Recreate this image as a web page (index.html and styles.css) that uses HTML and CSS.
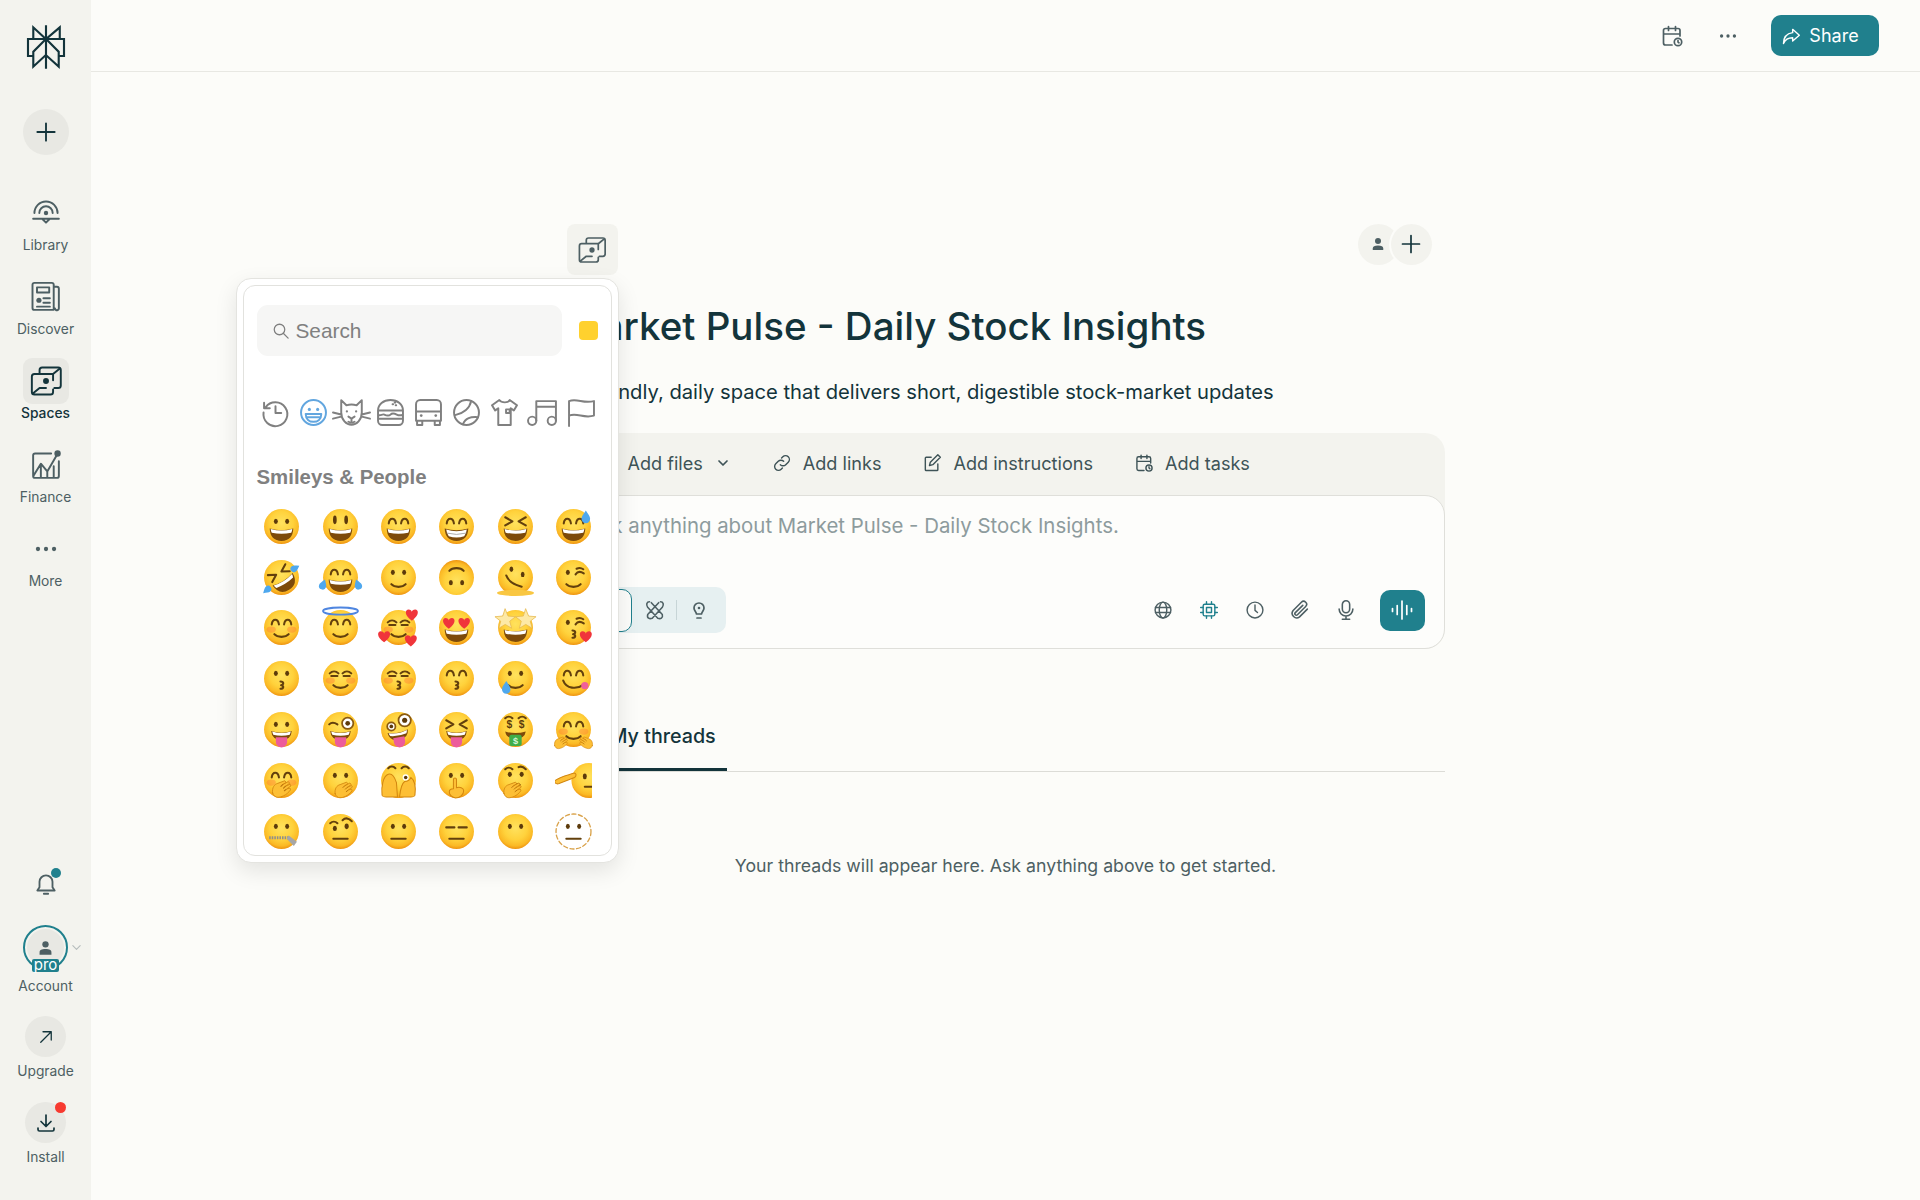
FILE: index.html
```html
<!DOCTYPE html>
<html lang="en">
<head>
<meta charset="utf-8">
<title>Market Pulse - Daily Stock Insights</title>
<link rel="stylesheet" href="styles.css">
</head>
<body>
<svg class="defs" aria-hidden="true">
  <defs>
    <radialGradient id="fg" cx="50%" cy="40%" r="60%">
      <stop offset="0" stop-color="#ffe25e"/><stop offset=".55" stop-color="#ffd23c"/><stop offset=".85" stop-color="#fbb925"/><stop offset="1" stop-color="#ee9410"/>
    </radialGradient>
    <g id="f"><circle cx="18" cy="18" r="17" fill="url(#fg)"/></g>
    <g id="ed"><ellipse class="k" cx="12.5" cy="13" rx="1.9" ry="2.5"/><ellipse class="k" cx="23.5" cy="13" rx="1.9" ry="2.5"/></g>
    <g id="etall"><ellipse class="k" cx="12.5" cy="11.5" rx="1.8" ry="4.2"/><ellipse class="k" cx="23.5" cy="11.5" rx="1.8" ry="4.2"/></g>
    <g id="ea"><path class="s" d="M8.5 15c.8-6 6-6 7 0M20.5 15c1-6 6.200-6 7 0"/></g>
    <g id="ec"><path class="s" d="M7.500 13c2.500-2.500 6-2.500 8.500 0M20 13c2.500-2.500 6-2.500 8.500 0M9 15.500h6M21 15.500h6"/></g>
    <g id="ex"><path class="s" d="M8 9l7 4-7 4M28 9l-7 4 7 4"/></g>
    <g id="ew"><ellipse class="k" cx="12.500" cy="13" rx="1.900" ry="2.500"/><path class="s" d="M20 15c2-3 5-3 8-1M21 9.500c2-1 4.500-1 6.500.5"/></g>
    <g id="mg"><path class="m" d="M6.500 20Q18 23.500 29.500 20 29 32 18 32 7 32 6.500 20Z"/><path class="w" d="M7.500 20.500Q18 23.500 28.500 20.500 28.300 22.500 27.500 24 18 26 8.500 24 7.700 22.500 7.500 20.500Z"/></g>
    <g id="mt"><path class="m" d="M6.500 20Q18 23.500 29.500 20 29 32 18 32 7 32 6.500 20Z"/><path class="w" d="M8 21Q18 24 28 21 27.500 25 25.500 27.500 18 30 10.500 27.500 8.500 25 8 21Z"/><path class="line" d="M8.800 24.500Q18 27 27.200 24.500"/></g>
    <g id="ms"><path class="s" d="M11 24.500c3 3.500 11 3.500 14 0"/></g>
    <g id="mf"><path class="s" d="M11 25h14"/></g>
    <g id="mk"><path class="s" d="M17 21c3.500 0 3.500 3 .5 3.500 3 .5 3 3.500-.5 3.500"/></g>
    <g id="mo"><path class="m" d="M8 19.500Q18 23 28 19.500 27.500 28 18 28 8.500 28 8 19.500Z"/><path class="w" d="M9 20Q18 23 27 20 26.800 21.500 26 23 18 25 10 23 9.200 21.500 9 20Z"/><path class="t" d="M12.500 25.500h11V30a5.500 5.500 0 0 1-11 0Z"/></g>
    <g id="bl"><ellipse class="bl" cx="8" cy="20" rx="4.500" ry="3"/><ellipse class="bl" cx="28" cy="20" rx="4.500" ry="3"/></g>
    <path id="h" class="hr" d="M0 4.500C-6.500 0-5.500-4.500-2.700-4.500-1.200-4.500 0-3.500 0-2.500 0-3.500 1.200-4.500 2.700-4.500 5.500-4.500 6.500 0 0 4.500Z"/>
    <path id="dr" class="dp" d="M0-5C2-2 3.200-.5 3.200 1.200a3.200 3.200 0 0 1-6.400 0C-3.200-.5-2-2 0-5Z"/>
    <path id="st" class="star" d="M0-8 2.200-2.500 8-2 3.500 1.500 5 7 0 4-5 7-3.500 1.500-8-2-2.200-2.500Z"/>
    <g id="hd"><path class="hand" d="M-9 6C-10 0-7-4-3-5L5-8l1.500 2-4 2.500L9-7l1.500 2-5 3.500 5.500-2.500 1 2-5 3.500 4-1 .5 2C7 9 0 11-3 11c-3 0-5-2-6-5Z"/><path class="fold" d="M2.500-3.500l-2 2M5.500-1.500l-2 2M6.500 2l-2 1.500"/></g>
    <path id="rk" d="M8.500 2.500v4M15.500 2.500v4M20 12V6.500a2 2 0 0 0-2-2H5.500a2 2 0 0 0-2 2V19a2 2 0 0 0 2 2H12M3.500 10H20"/>
    <g id="sp"><path d="M9 8.500V5.500a2 2 0 0 1 2-2h12.500a2 2 0 0 1 2 2v12a2 2 0 0 1-2 2h-3M19.500 8.500H5a2 2 0 0 0-2 2v12a2 2 0 0 0 2 2h12.500a2 2 0 0 0 2-2v-2M19.500 8.500v5M19.500 8.500L25 4M3.500 24L9 19.500h5"/><circle class="dot" cx="14" cy="14" r="2.300"/></g>
  </defs>
</svg>

<div class="app">
  <nav class="rail">
    <div class="rail-top">
      <svg class="logo" viewBox="0 0 24 24"><path d="M22.3977 7.0896h-2.3106V.0676l-7.5094 6.3542V.1577h-1.1554v6.1966L4.4904 0v7.0896H1.6023v10.3976h2.8882V24l6.932-6.3591v6.2005h1.1554v-6.0469l6.9318 6.1807v-6.4879h2.8882V7.0896zm-3.4657-4.531v4.531h-5.355l5.355-4.531zm-13.2862.0676 4.8452 4.4634H5.6458V2.6262zM2.7576 16.332V8.245h7.8476l-6.1149 6.1147v1.9723H2.7576zm2.8882 5.0404v-3.8852h.0001v-2.6488l5.7763-5.7764v7.0111l-5.7764 5.2993zm12.7086.0248-5.7766-5.1509V9.0618l5.7766 5.7766v6.5588zm2.8882-5.0652h-1.733v-1.9723L13.3948 8.245h7.8478v8.087z"/></svg>
      <div class="new-btn"><svg class="ic26" viewBox="0 0 24 24"><path d="M12 4v16M4 12h16"/></svg></div>
      <div class="nav-list">
        <a class="nav-item"><span class="nav-ic"><svg class="ic36" viewBox="0 0 28 28"><path d="M5 14a9 9 0 0 1 18 0M8.800 14a5.200 5.200 0 0 1 10.400 0M4 18.500h20M14 21.500l-3-3M14 21.500l3-3"/><circle class="dot" cx="14" cy="14" r="1.700"/></svg></span><span>Library</span></a>
        <a class="nav-item"><span class="nav-ic"><svg class="ic36" viewBox="0 0 28 28"><path d="M20 24H5a1.500 1.500 0 0 1-1.500-1.500v-18A1.500 1.500 0 0 1 5 3h13.500A1.500 1.500 0 0 1 20 4.500Zm0-18h2.500A1.500 1.500 0 0 1 24 7.500v15a1.500 1.500 0 0 1-3 .5M7 6.500h9.500v4H7ZM12 15h5M12 18.500h5M7 21.500h10"/><circle class="dot" cx="8.500" cy="16.500" r="2"/></svg></span><span>Discover</span></a>
        <a class="nav-item active"><span class="nav-ic"><svg class="ic36" viewBox="0 0 28 28"><use href="#sp"/></svg></span><span>Spaces</span></a>
        <a class="nav-item"><span class="nav-ic"><svg class="ic36" viewBox="0 0 28 28"><path d="M18 5H5.500A1.500 1.500 0 0 0 4 6.500v16A1.500 1.500 0 0 0 5.500 24h17a1.500 1.500 0 0 0 1.500-1.500V11M4.500 22l5.500-9 5 6 7-12M10 14v10M15 19v5M20 15v9"/><circle class="dot" cx="23" cy="5" r="2.500"/></svg></span><span>Finance</span></a>
        <a class="nav-item"><span class="nav-ic"><svg class="ic30" viewBox="0 0 28 28"><circle class="dot" cx="6.500" cy="14" r="2"/><circle class="dot" cx="14" cy="14" r="2"/><circle class="dot" cx="21.500" cy="14" r="2"/></svg></span><span>More</span></a>
      </div>
    </div>
    <div class="rail-bottom">
      <div class="bell"><svg class="ic26" viewBox="0 0 24 24"><path d="M4 18h16l-2-3v-5a6 6 0 0 0-12 0v5ZM10 21h4"/></svg><i class="badge teal"></i></div>
      <a class="nav-item account">
        <span class="ring"><span class="avatar"><svg viewBox="0 0 24 24"><circle cx="12" cy="8" r="4"/><path d="M4.500 21v-2.500C4.500 15 7 14 12 14s7.500 1 7.500 4.500V21Z"/></svg></span><b class="pro">pro</b></span>
        <svg class="acct-chev" viewBox="0 0 12 12"><path d="M2 4l4 4 4-4"/></svg>
        <span>Account</span>
      </a>
      <a class="nav-item round"><span class="disc"><svg class="ic18 dark" viewBox="0 0 24 24"><path d="M5 19L19 5M8 5h11v11"/></svg></span><span>Upgrade</span></a>
      <a class="nav-item round"><span class="disc"><svg class="ic24 dark" viewBox="0 0 24 24"><path d="M12 4v11M7 10.500l5 5 5-5M4 17v1.500A1.500 1.500 0 0 0 5.500 20h13a1.500 1.500 0 0 0 1.500-1.500V17"/></svg><i class="badge red"></i></span><span>Install</span></a>
    </div>
  </nav>

  <main class="main">
    <header class="topbar">
      <svg class="ic24 muted" viewBox="0 0 24 24"><use href="#rk"/><circle cx="18" cy="18" r="3.700"/><path d="M18 16.500V18l1 .8"/></svg>
      <svg class="dots" viewBox="0 0 24 24"><circle cx="5" cy="12" r="1.800"/><circle cx="12" cy="12" r="1.800"/><circle cx="19" cy="12" r="1.800"/></svg>
      <button class="share"><svg class="ic20 white" viewBox="0 0 24 24"><path d="M14 4l8 7-8 7v-4C9 14 5 16 3 21c0-7 4-12 11-13Z"/></svg>Share</button>
    </header>

    <section class="column">
      <div class="head-row">
        <div class="space-icon"><svg class="ic32" viewBox="0 0 28 28"><use href="#sp"/></svg></div>
        <div class="people">
          <span class="person"><svg viewBox="0 0 24 24"><circle cx="12" cy="8" r="4"/><path d="M5 20v-2c0-3 2.500-4 7-4s7 1 7 4v2Z"/></svg></span>
          <span class="invite"><svg class="ic24 dark" viewBox="0 0 24 24"><path d="M12 3.500v17M3.500 12h17"/></svg></span>
        </div>

        <div class="picker">
          <div class="picker-inner">
            <div class="search-row">
              <div class="search"><svg class="ic18 gray" viewBox="0 0 24 24"><circle cx="10" cy="10" r="7"/><path d="M15 15l6.500 6.500"/></svg><span>Search</span></div>
              <i class="swatch"></i>
            </div>
            <div class="cats">
              <svg viewBox="0 0 26 26"><path d="M3.500 8A11.500 11.500 0 1 1 1.500 13M2 3.500V9h5.500M13 7v6.500h5.500"/></svg>
              <svg class="on" viewBox="0 0 26 26"><circle cx="13" cy="13" r="12"/><circle class="fillc" cx="9" cy="10" r="1.500"/><circle class="fillc" cx="17" cy="10" r="1.500"/><path d="M5.500 14.500h15c0 5-3.500 7.500-7.500 7.500s-7.500-2.500-7.500-7.500ZM7 17.500h12"/></svg>
              <svg class="wide36" viewBox="0 0 36 26"><path d="M8 1l5 5c3-1 7-1 10 0l5-5v12c0 7-5 12-10 12S8 20 8 13ZM0 13l8 2M0 19l8-2M36 13l-8 2M36 19l-8-2M15 17l3 2 3-2M18 19v2M15 22c2 1 4 1 6 0"/><circle class="fillc" cx="13.500" cy="12" r="1.100"/><circle class="fillc" cx="22.500" cy="12" r="1.100"/></svg>
              <svg viewBox="0 0 26 26"><path d="M1 11C1 5 6 1 13 1s12 4 12 10ZM1 11h24M1 15c2 2 4-1 6 0s4 2 6 0 4-1 6 0 4 1 6 0M1 19h24v2a4 4 0 0 1-4 4H5a4 4 0 0 1-4-4ZM1 11v8M25 11v8M15 5h.5M18 6h.5M17 3.500h.5"/></svg>
              <svg viewBox="0 0 26 26"><path d="M1 5a4 4 0 0 1 4-4h16a4 4 0 0 1 4 4v16H1ZM1 12h24M2 21v4h5v-4M19 21v4h5v-4"/><circle class="fillc" cx="6" cy="16" r="1.300"/><circle class="fillc" cx="20" cy="16" r="1.300"/></svg>
              <svg viewBox="0 0 26 26"><circle cx="13" cy="13" r="12"/><path d="M17.500 2C16 9 10 14 2 15.500"/><path d="M24 17.500C17 17 12 18 9.500 24.500"/></svg>
              <svg viewBox="0 0 26 26"><path d="M8 1L1 6l3 5 3-2v16h12V9l3 2 3-5-7-5c-1 3-8 3-10 0ZM14.500 10h3.500v3.500h-3.500Z"/></svg>
              <svg class="wide30" viewBox="0 0 30 26"><path d="M9 21V2h19v19M9 7.500h19"/><circle cx="5" cy="21" r="4"/><circle cx="24" cy="21" r="4"/></svg>
              <svg class="wide26" viewBox="0 0 26 26"><path d="M1 26V2c8-3 14 3 24 0v14C15 19 9 13 1 16"/></svg>
            </div>
            <div class="cat-title">Smileys &amp; People</div>
            <div class="emoji-grid">
              <svg viewBox="0 0 36 36"><use href="#f"/><use href="#ed"/><use href="#mg"/></svg>
              <svg viewBox="0 0 36 36"><use href="#f"/><use href="#etall"/><use href="#mg"/></svg>
              <svg viewBox="0 0 36 36"><use href="#f"/><use href="#ea"/><use href="#mg"/></svg>
              <svg viewBox="0 0 36 36"><use href="#f"/><use href="#ea"/><use href="#mt"/></svg>
              <svg viewBox="0 0 36 36"><use href="#f"/><use href="#ex"/><use href="#mg"/></svg>
              <svg viewBox="0 0 36 36"><use href="#f"/><use href="#ea"/><use href="#mg"/><use href="#dr" transform="translate(30 9) scale(1.300)"/></svg>

              <svg viewBox="0 0 36 36"><use href="#f"/><g transform="rotate(-32 18 18)"><use href="#ex"/><use href="#mg"/></g><use href="#dr" transform="translate(4 30) rotate(-130)"/><use href="#dr" transform="translate(31 9) rotate(60)"/></svg>
              <svg viewBox="0 0 36 36"><use href="#f"/><use href="#ea"/><use href="#mg"/><use href="#dr" transform="translate(1 25) rotate(20) scale(1.100)"/><use href="#dr" transform="translate(35 25) rotate(-20) scale(1.100)"/></svg>
              <svg viewBox="0 0 36 36"><use href="#f"/><use href="#ed"/><use href="#ms"/></svg>
              <svg viewBox="0 0 36 36"><g transform="rotate(180 18 18)"><use href="#f"/><use href="#ed"/><use href="#ms"/></g></svg>
              <svg viewBox="0 0 36 36"><use href="#f"/><ellipse cx="18" cy="33" rx="18" ry="3" fill="#f9c742"/><ellipse class="k" cx="14" cy="10" rx="1.800" ry="2.600"/><ellipse class="k" cx="25" cy="15" rx="1.800" ry="2.600"/><path class="s" d="M9 16c2 6 8 9 15 11"/></svg>
              <svg viewBox="0 0 36 36"><use href="#f"/><use href="#ew"/><use href="#ms"/></svg>

              <svg viewBox="0 0 36 36"><use href="#f"/><use href="#bl"/><use href="#ea"/><use href="#ms"/></svg>
              <svg viewBox="0 0 36 36"><use href="#f"/><use href="#ea"/><use href="#ms"/><ellipse class="halo" cx="18" cy="2" rx="17" ry="3.500"/></svg>
              <svg viewBox="0 0 36 36"><use href="#f"/><use href="#bl"/><use href="#ec"/><use href="#ms"/><use href="#h" transform="translate(31 6) scale(1.200)"/><use href="#h" transform="translate(4 27) scale(1.200)"/><use href="#h" transform="translate(30 31) scale(1.200)"/></svg>
              <svg viewBox="0 0 36 36"><use href="#f"/><use href="#h" transform="translate(10.500 14) scale(1.150)"/><use href="#h" transform="translate(25.500 14) scale(1.150)"/><use href="#mg"/></svg>
              <svg viewBox="0 0 36 36"><use href="#f"/><use href="#mg"/><use href="#st" transform="translate(8 10) scale(1.250)"/><use href="#st" transform="translate(28 10) scale(1.250)"/></svg>
              <svg viewBox="0 0 36 36"><use href="#f"/><use href="#ew"/><use href="#mk"/><use href="#h" transform="translate(30 27) scale(1.200)"/></svg>

              <svg viewBox="0 0 36 36"><use href="#f"/><use href="#ed"/><use href="#mk"/></svg>
              <svg viewBox="0 0 36 36"><use href="#f"/><use href="#bl"/><use href="#ec"/><use href="#ms"/></svg>
              <svg viewBox="0 0 36 36"><use href="#f"/><use href="#bl"/><use href="#ec"/><use href="#mk"/></svg>
              <svg viewBox="0 0 36 36"><use href="#f"/><use href="#ea"/><use href="#mk"/></svg>
              <svg viewBox="0 0 36 36"><use href="#f"/><use href="#ed"/><use href="#ms"/><use href="#dr" transform="translate(9 27) scale(1.300)"/></svg>
              <svg viewBox="0 0 36 36"><use href="#f"/><use href="#ea"/><path class="s" d="M8 20c3 8 13 9 20 4"/><circle class="hr2" cx="29" cy="25" r="3.500"/></svg>

              <svg viewBox="0 0 36 36"><use href="#f"/><use href="#ed"/><use href="#mo"/></svg>
              <svg viewBox="0 0 36 36"><use href="#f"/><path class="s" d="M7 13c2-2 5-2 8 0"/><circle cx="25" cy="12" r="5.500" fill="#fff" stroke="#8a5a10"/><circle class="k" cx="25" cy="12" r="2.300"/><use href="#mo"/></svg>
              <svg viewBox="0 0 36 36"><use href="#f"/><circle cx="11" cy="15" r="4" fill="#fff" stroke="#8a5a10"/><circle class="k" cx="11" cy="15" r="1.800"/><circle cx="24" cy="9" r="6" fill="#fff" stroke="#8a5a10"/><circle class="k" cx="24" cy="9" r="2.500"/><use href="#mo" transform="rotate(-10 18 24)"/></svg>
              <svg viewBox="0 0 36 36"><use href="#f"/><use href="#ex"/><use href="#mo"/></svg>
              <svg viewBox="0 0 36 36"><use href="#f"/><path class="s" d="M8 7c2-2 5-2 7 0M21 7c2-2 5-2 7 0"/><text class="dollar" x="12" y="17">$</text><text class="dollar" x="24" y="17">$</text><path class="m" d="M8 20Q18 23 28 20 27 27 18 27 9 27 8 20Z"/><rect x="12" y="23" width="12" height="11" rx="2" fill="#3fae49"/><text class="bill" x="18" y="32">$</text></svg>
              <svg viewBox="0 0 36 36"><use href="#f"/><use href="#bl"/><use href="#ea"/><use href="#ms"/><use href="#hd" transform="translate(5 30) scale(.6)"/><use href="#hd" transform="translate(31 30) scale(-.6 .6)"/></svg>

              <svg viewBox="0 0 36 36"><use href="#f"/><use href="#bl"/><use href="#ea"/><use href="#hd" transform="translate(17 25) scale(.85)"/></svg>
              <svg viewBox="0 0 36 36"><use href="#f"/><use href="#ed"/><use href="#hd" transform="translate(20 26) scale(.8)"/></svg>
              <svg viewBox="0 0 36 36"><use href="#f"/><path class="s" d="M8 6c2-2 5-2 7 0M21 6c2-2 5-2 7 0"/><circle cx="25" cy="15" r="3" fill="#fff"/><circle class="k" cx="25" cy="15" r="1.700"/><path class="hand" d="M2 32C1 24 3 14 8 12c3-1 6 2 8 8l1 14H6c-2 0-4-1-4-2ZM34 32c1-8 0-14-4-17-1 3-3 4-6 4-3 2-4 6-5 15h11c2 0 4-1 4-2Z"/></svg>
              <svg viewBox="0 0 36 36"><use href="#f"/><use href="#ed"/><path class="hand" d="M15 17c0-2 3-2 3 0v8c3-1 7 0 7 3 0 4-4 7-8 7-4-1-6-3-6-6 0-2 2-3 4-3Z"/></svg>
              <svg viewBox="0 0 36 36"><use href="#f"/><path class="s" d="M8 7c2-2 5-2 7 0M21 5c2-1 5 0 7 2"/><ellipse class="k" cx="12.500" cy="12" rx="2" ry="2.600"/><ellipse class="k" cx="24" cy="12" rx="2" ry="2.600"/><path class="s" d="M13 23c3-2 6-2 9-1"/><use href="#hd" transform="translate(14 26) scale(.8)"/></svg>
              <svg viewBox="0 0 36 36"><circle cx="33" cy="18" r="17" fill="url(#fg)"/><ellipse class="k" cx="29" cy="14" rx="1.900" ry="2.700"/><path class="s" d="M29 24h7"/><path class="hand" d="M0 18c6-4 12-5 18-7 3-1 3 3 1 4-5 2-10 4-15 6-3 1-5-1-4-3Z"/></svg>

              <svg viewBox="0 0 36 36"><use href="#f"/><use href="#ed"/><path class="zip" d="M6 24h19"/><path class="zipb" d="M25 22l8 6-3 4-7-7Z"/></svg>
              <svg viewBox="0 0 36 36"><use href="#f"/><path class="s" d="M8 10c2-2 5-2 7 0M20 7c3-3 6-2 9 1"/><ellipse class="k" cx="12.500" cy="15" rx="2" ry="2.500"/><ellipse class="k" cx="24" cy="13" rx="2" ry="2.700"/><use href="#mf"/></svg>
              <svg viewBox="0 0 36 36"><use href="#f"/><use href="#ed"/><use href="#mf"/></svg>
              <svg viewBox="0 0 36 36"><use href="#f"/><path class="s" d="M8 14h8M20 14h8"/><use href="#mf"/></svg>
              <svg viewBox="0 0 36 36"><use href="#f"/><use href="#ed"/></svg>
              <svg viewBox="0 0 36 36"><circle class="dashed" cx="18" cy="18" r="17"/><use href="#ed"/><use href="#mf"/></svg>
            </div>
          </div>
        </div>
      </div>

      <h1 class="title">Market Pulse - Daily Stock Insights</h1>
      <p class="desc">A friendly, daily space that delivers short, digestible stock-market updates</p>

      <div class="composer">
        <div class="tools">
          <div class="tool"><svg class="ic20" viewBox="0 0 24 24"><path d="M6 3h8l5 5v13H6Z"/></svg><span>Add files</span><svg class="chev" viewBox="0 0 16 16"><path d="M4 6l4 4 4-4"/></svg></div>
          <div class="tool"><svg class="ic20" viewBox="0 0 24 24"><path d="M10 14a4.500 4.500 0 0 0 6.500 0l3-3a4.500 4.500 0 0 0-6.500-6.500l-1.500 1.500M14 10a4.500 4.500 0 0 0-6.500 0l-3 3a4.500 4.500 0 0 0 6.500 6.500l1.500-1.500"/></svg><span>Add links</span></div>
          <div class="tool"><svg class="ic20" viewBox="0 0 24 24"><path d="M11 5H5a1 1 0 0 0-1 1v14a1 1 0 0 0 1 1h13a1 1 0 0 0 1-1v-7M9 15l1-4L19 2l3 3-9 9Z"/></svg><span>Add instructions</span></div>
          <div class="tool"><svg class="ic20" viewBox="0 0 24 24"><use href="#rk"/><circle cx="18" cy="18" r="3.700"/><path d="M18 16.500V18l1 .8"/></svg><span>Add tasks</span></div>
        </div>
        <div class="input">
          <div class="placeholder">Ask anything about Market Pulse - Daily Stock Insights.</div>
          <div class="input-row">
            <div class="modes">
              <span class="mode-on"></span>
              <svg class="ic22 mode" viewBox="0 0 24 24"><path d="M6 3c-3 0-4 3-2 6l11 12c3 1 6 0 5-4L8 4M18 3c3 0 4 3 2 6L9 21c-3 1-6 0-5-4L16 4"/></svg>
              <i class="mode-sep"></i>
              <svg class="ic24 mode" viewBox="0 0 24 24"><path d="M7 10a5 5 0 0 1 10 0c0 2.500-2 3.500-2.500 6h-5C9 13.500 7 12.500 7 10ZM10 20h4"/><circle class="dot" cx="12" cy="10" r="1.300"/></svg>
            </div>
            <div class="actions">
              <span class="act"><svg class="ic20" viewBox="0 0 24 24"><circle cx="12" cy="12" r="9.500"/><ellipse cx="12" cy="12" rx="4.500" ry="9.500"/><path d="M3 9h18M3 15h18"/></svg></span>
              <span class="act"><svg class="ic20 tealstroke" viewBox="0 0 24 24"><rect x="5" y="5" width="14" height="14" rx="2"/><rect x="9" y="9" width="6" height="6"/><path d="M9 2v3M15 2v3M9 19v3M15 19v3M2 9h3M2 15h3M19 9h3M19 15h3"/></svg></span>
              <span class="act"><svg class="ic20" viewBox="0 0 24 24"><circle cx="12" cy="12" r="9.500"/><path d="M12 6v6.500l3 2.500"/></svg></span>
              <span class="act"><svg class="ic22" viewBox="0 0 24 24"><path d="M20 11l-8.500 8.500a5 5 0 0 1-7-7l9-9a3.300 3.300 0 0 1 4.700 4.700l-9 9a1.600 1.600 0 0 1-2.300-2.300L15 7"/></svg></span>
              <span class="act"><svg class="ic22" viewBox="0 0 24 24"><rect x="8" y="2" width="8" height="13" rx="4"/><path d="M4.500 11a7.500 7.500 0 0 0 15 0M12 18.500V22M8 22h8"/></svg></span>
              <button class="voice"><svg class="ic24 white" viewBox="0 0 24 24"><path d="M2.500 10.500v3M7.200 7.500v9M12 3v18M16.800 7.500v9M21.500 10.500v3"/></svg></button>
            </div>
          </div>
        </div>
      </div>

      <div class="tabs"><span class="tab">My threads</span></div>
      <p class="empty">Your threads will appear here. Ask anything above to get started.</p>
    </section>
  </main>
</div>
</body>
</html>
```

FILE: styles.css
```css
* { box-sizing: border-box; }
html, body { margin: 0; height: 100%; }
body { font-family: Inter, "Liberation Sans", sans-serif; color: #13343b; background: #fcfcf9; overflow: hidden; }
svg { display: block; fill: none; stroke: currentColor; stroke-width: 1.7; stroke-linecap: round; stroke-linejoin: round; flex: none; }
.defs { position: absolute; width: 0; height: 0; }

.app { display: flex; height: 1200px; }
.rail { width: 91px; flex: none; background: #f3f3ee; display: flex; flex-direction: column; justify-content: space-between; align-items: center; padding: 25px 0 12px; color: #4d5f63; font-size: 13.8px; }
.rail-top, .rail-bottom { display: flex; flex-direction: column; align-items: center; width: 100%; }
.logo { width: 44px; height: 44px; fill: #13343b; stroke: none; }
.new-btn { width: 46px; height: 46px; margin-top: 40px; border-radius: 50%; background: #e8e8e3; display: flex; align-items: center; justify-content: center; color: #13343b; }
.ic36 { width: 36px; height: 36px; stroke-width: 1.5; }
.ic32 { width: 32px; height: 32px; stroke-width: 1.5; }
.ic30 { width: 30px; height: 30px; }
.ic26 { width: 26px; height: 26px; }
.ic24 { width: 24px; height: 24px; }
.ic22 { width: 22px; height: 22px; }
.ic20 { width: 20px; height: 20px; }
.ic18 { width: 18px; height: 18px; }
.dot { fill: currentColor; stroke: none; }
.dark { color: #13343b; }
.muted { color: #4d5f63; }
.white { color: #fff; }
.gray { color: #808080; }
.tealstroke { color: #20808d; }
.nav-list { display: flex; flex-direction: column; width: 100%; margin-top: 35px; row-gap: 7px; }
.nav-item { display: flex; flex-direction: column; align-items: center; width: 100%; height: 77px; line-height: 18px; position: relative; }
.nav-ic { width: 46px; height: 46px; border-radius: 9px; display: flex; align-items: center; justify-content: center; }
.active { color: #13343b; font-weight: 500; }
.active .nav-ic { background: #e8e8e3; }
.bell { position: relative; margin-bottom: 28px; color: #4d5f63; }
.badge { position: absolute; border-radius: 50%; }
.badge.teal { width: 10px; height: 10px; right: -2px; top: -3px; background: #20808d; }
.badge.red { width: 11px; height: 11px; right: 0; top: 0; background: #f73a30; }
.ring { width: 45px; height: 45px; border: 2px solid #20808d; border-radius: 50%; padding: 2px; position: relative; display: block; margin-bottom: 7px; }
.avatar { display: flex; align-items: center; justify-content: center; width: 100%; height: 100%; border-radius: 50%; background: #e8e8e3; color: #4d5f63; }
.avatar svg { width: 19px; height: 19px; fill: currentColor; stroke: none; }
.pro { position: absolute; left: 7px; bottom: -4px; width: 27px; height: 13px; border-radius: 2px; background: #20808d; color: #fff; font-size: 15px; line-height: 11px; font-weight: 400; text-align: center; }
.nav-item.account { height: 91px; }
.acct-chev { position: absolute; left: 71px; top: 17px; width: 11px; height: 11px; color: #b5bcbc; stroke-width: 1.2; }
.nav-item.round { height: 86px; }
.disc { width: 41px; height: 41px; border-radius: 50%; background: #e8e8e3; display: flex; align-items: center; justify-content: center; position: relative; margin-bottom: 5px; }

.main { flex: 1; min-width: 0; display: flex; flex-direction: column; }
.topbar { height: 72px; flex: none; border-bottom: 1px solid #e8e8e3; display: flex; align-items: center; justify-content: flex-end; padding-right: 41px; }
.dots { width: 22px; height: 22px; margin-left: 33px; fill: #4d5f63; stroke: none; }
.share { width: 108px; height: 41px; margin-left: 32px; border: 0; border-radius: 10px; background: #20808d; color: #fff; font: 400 18px Inter, sans-serif; display: flex; align-items: center; justify-content: center; gap: 8px; padding: 0 10px 0 0; }

.column { width: 878px; margin: 0 auto; padding-top: 152px; position: relative; }
.head-row { display: flex; align-items: center; justify-content: space-between; height: 51px; padding-right: 13px; position: relative; }
.space-icon { width: 51px; height: 51px; border-radius: 8px; background: #f3f3ee; display: flex; align-items: center; justify-content: center; color: #4d5f63; }
.people { display: flex; align-items: center; margin-bottom: 11px; }
.person, .invite { width: 41px; height: 41px; border-radius: 50%; background: #f3f3ee; display: flex; align-items: center; justify-content: center; }
.person { color: #4d5f63; }
.person svg { width: 18px; height: 18px; fill: currentColor; stroke: none; }
.invite { margin-left: -8px; box-shadow: 0 0 0 2px #fcfcf9; }

.picker { position: absolute; left: -331px; top: 54px; width: 383px; height: 585px; padding: 6px; background: #fff; border: 1px solid #e4e4e0; border-radius: 15px; box-shadow: 0 8px 22px rgba(0, 0, 0, .1); z-index: 5; }
.picker-inner { height: 100%; border: 1px solid #e2e2de; border-radius: 12px; background: #fff; padding: 19px 13px 0; overflow: hidden; font-family: "Liberation Sans", Arial, sans-serif; }
.search-row { display: flex; align-items: center; gap: 17px; }
.search { width: 308px; height: 51px; background: #f6f6f5; border-radius: 11px; display: flex; align-items: center; gap: 6px; padding-left: 15px; color: #808080; font-size: 20.8px; }
.swatch { width: 19px; height: 19px; background: #ffd12e; border-radius: 4px; }
.cats { display: grid; grid-template-columns: repeat(9, 38.200px); margin-top: 41px; height: 30px; align-items: center; justify-items: center; color: #808080; }
.cats svg { width: 27px; height: 27px; stroke-width: 1.900; overflow: visible; }
.cats .wide36 { width: 37px; }
.cats .wide30 { width: 31px; }
.cats .on { color: #62a6df; }
.fillc { fill: currentColor; stroke: none; }
.cat-title { margin-top: 38px; line-height: 24px; font-size: 20.400px; font-weight: 700; color: #808080; }
.emoji-grid { display: grid; grid-template-columns: repeat(6, 58.400px); grid-auto-rows: 50.800px; margin: 12px 0 0 -4px; justify-items: center; align-items: center; }
.emoji-grid svg { width: 37px; height: 37px; overflow: visible; stroke: none; }
.emoji-grid svg:nth-child(36) { overflow: hidden; }
.k { fill: #5c3a0b; stroke: none; }
.m { fill: #7d4a0a; stroke: none; }
.w { fill: #fff; stroke: none; }
.t { fill: #ec5c9b; stroke: none; }
.s { fill: none; stroke: #63400d; stroke-width: 2; }
.line { fill: none; stroke: #9a9a9a; stroke-width: .8; }
.bl { fill: #ff6b35; opacity: .35; stroke: none; }
.hr { fill: #f0353b; stroke: none; }
.hr2 { fill: #f0609a; stroke: none; }
.dp { fill: #4fa8ee; stroke: none; }
.star { fill: #fde9a6; stroke: #e6b94e; stroke-width: .6; }
.hand { fill: #fdbf35; stroke: #d2860f; stroke-width: 1; }
.fold { fill: none; stroke: #b8720b; stroke-width: 1.200; }
.halo { fill: none; stroke: #4f86e0; stroke-width: 1.800; }
.dollar { font: 700 10px "Liberation Sans", sans-serif; fill: #5c3a0b; stroke: none; text-anchor: middle; }
.bill { font: 700 9px "Liberation Sans", sans-serif; fill: #d6f5d6; stroke: none; text-anchor: middle; }
.zip { fill: none; stroke: #8e8e8e; stroke-width: 3; stroke-dasharray: 1.500 1; stroke-linecap: butt; }
.zipb { fill: #a6a6a6; stroke: none; }
.dashed { fill: #fff; stroke: #d9a24a; stroke-width: 1.300; stroke-dasharray: 4 2.500; }

.title { margin: 27px 0 0; font-size: 38.500px; line-height: 48px; font-weight: 500; color: #13343b; }
.desc { margin: 28px 0 0; font-size: 20.200px; line-height: 28px; font-weight: 400; color: #13343b; }
.composer { margin-top: 27px; height: 216px; background: #f3f3ee; border-radius: 20px; display: flex; flex-direction: column; }
.tools { height: 62px; flex: none; display: flex; align-items: center; gap: 41px; padding: 0 0 2px 30px; color: #3e5357; font-size: 18.100px; }
.tool { display: flex; align-items: center; gap: 11px; }
.chev { width: 16px; height: 16px; margin-left: 1px; }
.input { flex: 1; background: #fdfdfb; border: 1.500px solid #dfdfda; border-top-width: 1px; border-radius: 20px; padding: 15px 19px 15px 17px; display: flex; flex-direction: column; justify-content: space-between; }
.placeholder { font-size: 20.400px; line-height: 28px; padding: 1px 0 0 2px; color: #8d9b9d; }
.input-row { display: flex; align-items: center; justify-content: space-between; }
.modes { display: flex; align-items: center; width: 141px; height: 46px; background: #e6f0f1; border-radius: 10px; color: #4d5f63; }
.mode-on { width: 47px; height: 43px; background: #fdfdfb; border: 1.500px solid #20808d; border-radius: 10px; margin-right: 12px; }
.mode-sep { width: 1px; height: 20px; background: #c7d5d7; margin: 0 10px; }
.actions { display: flex; align-items: center; color: #4d5f63; }
.act { width: 45.600px; height: 41px; display: flex; align-items: center; justify-content: center; }
.voice { width: 45px; height: 41px; margin-left: 11px; border: 0; border-radius: 10px; background: #20808d; display: flex; align-items: center; justify-content: center; padding: 0; }
.tabs { margin-top: 68px; height: 55px; border-bottom: 1.500px solid #dcdcd7; display: flex; }
.tab { margin-left: 32px; padding: 5px 11px 0; height: 54px; line-height: 28px; border-bottom: 3.500px solid #13343b; font-size: 19.700px; font-weight: 500; }
.empty { margin: 80px 0 0; text-align: center; font-size: 17.700px; line-height: 28px; color: #4d5f63; }
```
